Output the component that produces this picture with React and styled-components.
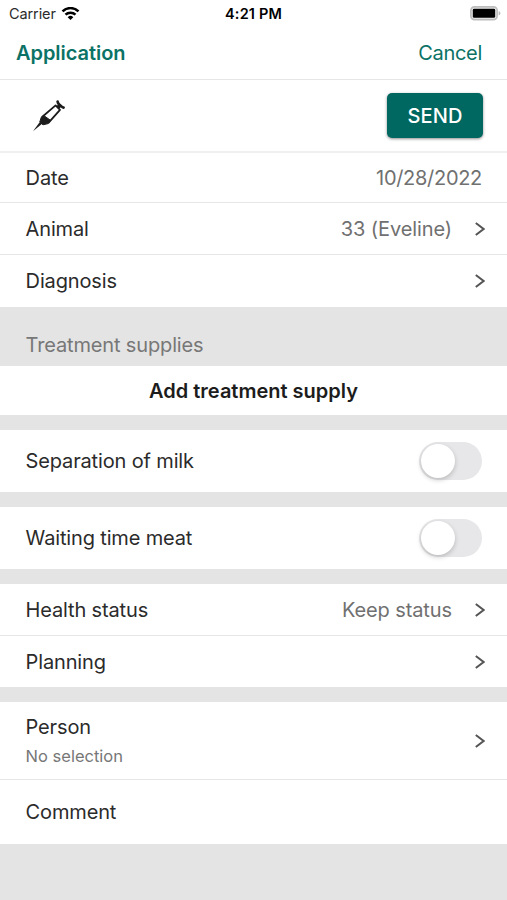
import React, { useState } from "react"
import styled, { createGlobalStyle } from "styled-components"

export default function App() {
  const [milk, setMilk] = useState(false)
  const [meat, setMeat] = useState(false)

  return (
    <Screen>
      <GlobalStyle />
      <StatusBar>
        <Carrier>
          Carrier
          <WifiIcon />
        </Carrier>
        <Clock>4:21 PM</Clock>
        <Power>
          <BatteryIcon />
        </Power>
      </StatusBar>
      <Header>
        <Title>Application</Title>
        <Cancel>Cancel</Cancel>
      </Header>
      <SendRow>
        <SyringeIcon />
        <SendButton>SEND</SendButton>
      </SendRow>
      <Row $height={50}>
        <Label>Date</Label>
        <Value $track={-0.3}>10/28/2022</Value>
      </Row>
      <Row $height={52}>
        <Label>Animal</Label>
        <Value>33 (Eveline)</Value>
        <Chevron />
      </Row>
      <Row $height={52} $last>
        <Label>Diagnosis</Label>
        <Chevron />
      </Row>
      <SectionTitle>Treatment supplies</SectionTitle>
      <AddButton>Add treatment supply</AddButton>
      <Gap />
      <Row $height={62} $last>
        <Label>Separation of milk</Label>
        <Switch role="switch" aria-checked={milk} $on={milk} onClick={() => setMilk(!milk)}>
          <Knob />
        </Switch>
      </Row>
      <Gap />
      <Row $height={62} $last>
        <Label>Waiting time meat</Label>
        <Switch role="switch" aria-checked={meat} $on={meat} onClick={() => setMeat(!meat)}>
          <Knob />
        </Switch>
      </Row>
      <Gap />
      <Row $height={52}>
        <Label>Health status</Label>
        <Value>Keep status</Value>
        <Chevron />
      </Row>
      <Row $height={51} $last>
        <Label>Planning</Label>
        <Chevron />
      </Row>
      <Gap />
      <Row $height={78}>
        <Stack>
          <Label>Person</Label>
          <Hint>No selection</Hint>
        </Stack>
        <Chevron />
      </Row>
      <Row $height={64} $last>
        <Label>Comment</Label>
      </Row>
    </Screen>
  )
}

function WifiIcon() {
  return (
    <svg width="19" height="14" viewBox="0 0 18 14" fill="none" stroke="#000" strokeWidth="2.5">
      <path d="M1 4.4a11.3 11.3 0 0 1 16 0" />
      <path d="M4 7.7a7.1 7.1 0 0 1 10 0" />
      <path d="M9 13 6.2 10.2a4 4 0 0 1 5.6 0z" fill="#000" stroke="none" />
    </svg>
  )
}

function BatteryIcon() {
  return (
    <svg width="31" height="15" viewBox="0 0 31 15">
      <rect x="0.9" y="0.9" width="26.2" height="12.8" rx="3.6" fill="#eee" stroke="#bdbdbd" strokeWidth="1.7" />
      <rect x="2.8" y="2.8" width="22.4" height="9" rx="1.4" fill="#000" />
      <path d="M28.6 5.2c1.3.4 1.8 1.2 1.8 2.1s-.5 1.7-1.8 2.1z" fill="#b9b9b9" />
    </svg>
  )
}

function SyringeIcon() {
  return (
    <svg width="34" height="32" viewBox="0 0 34 32" fill="none" stroke="#1c1c1c">
      <path d="M1 31.2 7.8 22l2 1.9z" fill="#1c1c1c" stroke="none" />
      <path d="M9.2 17.4 11.6 15.4 18.6 20.4 16.2 23.6 11 24.8 7.8 22z" fill="#1c1c1c" strokeLinejoin="round" />
      <path d="M9.8 17.2 23.6 5.4l4.4 4.4-11.8 13.4" strokeWidth="1.8" strokeLinejoin="round" />
      <path d="M25.6 7.8 28.6 4.6" strokeWidth="3.8" />
      <path d="M25.6 1.7c.1 1.5 1 2.6 2.3 3.4 1.3.8 1.9 2.2 3.7 2.5" strokeWidth="2.7" strokeLinecap="round" />
    </svg>
  )
}

function Chevron() {
  return (
    <Arrow width="10" height="14" viewBox="0 0 10 14">
      <path d="M.8 1 8.6 7 .8 13" fill="none" stroke="#555" strokeWidth="2" />
    </Arrow>
  )
}

const GlobalStyle = createGlobalStyle`
  body {
    margin: 0;
    background: #e4e4e4;
    font-family: Inter, "Liberation Sans", sans-serif;
    color: #2b2b2b;
  }

  button {
    font-family: inherit;
    border: none;
    padding: 0;
    background: none;
  }
`

const Screen = styled.div`
  min-height: 900px;
  background: #e4e4e4;
`

const StatusBar = styled.div`
  display: grid;
  grid-template-columns: 1fr auto 1fr;
  align-items: center;
  height: 27px;
  padding: 0 6px 0 9px;
  background: #fff;
  color: #000;
`

const Carrier = styled.div`
  display: flex;
  align-items: center;
  gap: 5px;
  font-size: 14.5px;
  letter-spacing: -0.1px;
  color: #2b2b2b;
`

const Clock = styled.div`
  margin-right: 3px;
  font-size: 14.5px;
  font-weight: 600;
  letter-spacing: 0.15px;
`

const Power = styled.div`
  display: flex;
  justify-content: flex-end;
`

const Header = styled.div`
  display: flex;
  align-items: center;
  justify-content: space-between;
  box-sizing: border-box;
  height: 53px;
  padding: 0 25px 0 16px;
  background: #fff;
  border-bottom: 1px solid #e6e6e6;
`

const Title = styled.h1`
  margin: 0;
  font-size: 20px;
  font-weight: 600;
  letter-spacing: -0.05px;
  color: #0b7265;
`

const Cancel = styled.button`
  font-size: 20px;
  letter-spacing: -0.3px;
  color: #0b7265;
`

const SendRow = styled.div`
  display: flex;
  align-items: center;
  justify-content: space-between;
  box-sizing: border-box;
  height: 73px;
  padding: 0 24px 0 32px;
  background: #fff;
  border-bottom: 2px solid #efefef;
`

const SendButton = styled.button`
  width: 96px;
  height: 45px;
  border-radius: 5px;
  background: #006860;
  color: #fff;
  font-size: 20px;
  font-weight: 500;
  letter-spacing: 0.1px;
  box-shadow: 0 1px 3px rgba(0, 0, 0, 0.45);
`

const Row = styled.div`
  display: flex;
  align-items: center;
  box-sizing: border-box;
  height: ${(p) => p.$height}px;
  padding: 0 25px 0 25.6px;
  background: #fff;
  border-bottom: ${(p) => (p.$last ? "none" : "1px solid #e6e6e6")};
`

const Label = styled.div`
  flex: 1;
  font-size: 20px;
  line-height: 24px;
  letter-spacing: -0.15px;
`

const Value = styled.div`
  font-size: 20px;
  letter-spacing: ${(p) => p.$track ?? -0.1}px;
  color: #707070;
`

const Arrow = styled.svg`
  margin: 0 -3px 0 23px;
`

const Stack = styled.div`
  flex: 1;
`

const Hint = styled.div`
  margin-top: 7px;
  font-size: 16.5px;
  line-height: 20px;
  color: #777;
`

const SectionTitle = styled.div`
  box-sizing: border-box;
  height: 59px;
  padding: 26px 25.6px 0;
  font-size: 20px;
  line-height: 24px;
  letter-spacing: -0.15px;
  color: #777;
`

const AddButton = styled.button`
  display: block;
  width: 100%;
  height: 49px;
  background: #fff;
  color: #1c1c1c;
  font-size: 20px;
  font-weight: 600;
`

const Gap = styled.div`
  height: 15px;
`

const Switch = styled.button`
  display: flex;
  align-items: center;
  justify-content: ${(p) => (p.$on ? "flex-end" : "flex-start")};
  width: 63px;
  height: 38px;
  padding: 0 2px;
  border-radius: 19px;
  background: ${(p) => (p.$on ? "#006860" : "#e7e7e9")};
`

const Knob = styled.span`
  width: 34px;
  height: 34px;
  border-radius: 50%;
  background: #fff;
  box-shadow: 0 2px 5px rgba(0, 0, 0, 0.2);
`
